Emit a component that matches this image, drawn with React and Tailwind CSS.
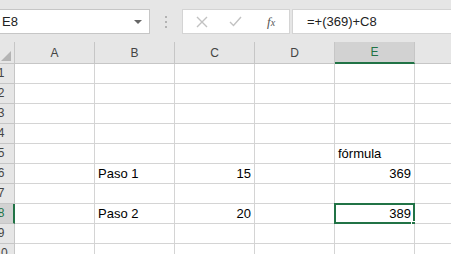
import React from 'react'

const cols = ['A', 'B', 'C', 'D', 'E', 'F']

// cell contents keyed by row number
const cells = {
  5: { E: { text: 'fórmula', align: 'left' } },
  6: { B: { text: 'Paso 1', align: 'left' }, C: { text: '15', align: 'right' }, E: { text: '369', align: 'right' } },
  8: { B: { text: 'Paso 2', align: 'left' }, C: { text: '20', align: 'right' }, E: { text: '389', align: 'right' } },
}

function Toolbar() {
  return (
    <div className="flex h-[42px] items-start pt-[9px]">
      {/* name box */}
      <div className="flex h-[25px] w-[150px] shrink-0 items-center justify-between border border-l-0 border-[#c6c6c6] bg-white pr-[7px]">
        <span className="pl-[2px] text-[13px] text-[#222]">E8</span>
        <span className="h-0 w-0 border-x-[4px] border-t-[4px] border-x-transparent border-t-[#666]"></span>
      </div>
      {/* grip dots */}
      <div className="flex w-[32px] shrink-0 flex-col items-center gap-[3px] pt-[7px]">
        <span className="h-[2px] w-[2px] bg-[#b3b3b3]"></span>
        <span className="h-[2px] w-[2px] bg-[#b3b3b3]"></span>
        <span className="h-[2px] w-[2px] bg-[#b3b3b3]"></span>
      </div>
      {/* cancel / enter / fx */}
      <div className="flex h-[25px] w-[108px] shrink-0 items-center border border-[#d4d4d4] bg-white">
        <svg width="12" height="12" viewBox="0 0 12 12" className="ml-[13px]">
          <path d="M1 1 L11 11 M11 1 L1 11" stroke="#c2c2c2" strokeWidth="1.4" fill="none" />
        </svg>
        <svg width="13" height="11" viewBox="0 0 13 11" className="ml-[21px]">
          <path d="M1 6 L4.5 9.5 L12 1" stroke="#c2c2c2" strokeWidth="1.4" fill="none" />
        </svg>
        <span className="ml-[25px] font-['Liberation_Serif'] text-[13px] italic text-[#555]">
          f<span className="text-[10px]">x</span>
        </span>
      </div>
      {/* formula input */}
      <div className="ml-[2px] flex h-[25px] flex-1 items-center border border-r-0 border-[#d4d4d4] bg-white pl-[14px]">
        <span className="text-[13px] text-[#222]">=+(369)+C8</span>
      </div>
    </div>
  )
}

function HeaderRow() {
  return (
    <div className="flex h-[22px]">
      <div className="relative w-[15px] shrink-0 border-r border-b border-[#c6c6c6] bg-[#e6e6e6]">
        <span className="absolute bottom-[2px] right-[3px] h-0 w-0 border-b-[10px] border-l-[10px] border-b-[#b4b4b4] border-l-transparent"></span>
      </div>
      {cols.map((c) => {
        const sel = c === 'E'
        return (
          <div
            key={c}
            className={
              sel
                ? 'flex w-[80px] shrink-0 items-center justify-center border-r border-b-2 border-r-[#c6c6c6] border-b-[#217346] bg-[#d2d2d2] text-[12px] text-[#217346]'
                : 'flex w-[80px] shrink-0 items-center justify-center border-r border-b border-[#c6c6c6] bg-[#e6e6e6] text-[12px] text-[#444]'
            }
          >
            {/* F's letter sits past the right edge of the window */}
            {c !== 'F' && c}
          </div>
        )
      })}
    </div>
  )
}

function Row({ n }) {
  const sel = n === 8
  const data = cells[n] || {}
  return (
    <div className="flex h-[20px]">
      <div
        className={
          sel
            ? 'w-[15px] shrink-0 overflow-hidden border-r-2 border-b border-r-[#217346] border-b-[#c6c6c6] bg-[#d2d2d2]'
            : 'w-[15px] shrink-0 overflow-hidden border-r border-b border-[#c6c6c6] bg-[#e6e6e6]'
        }
      >
        <div className={sel ? 'ml-[-13px] w-[28px] text-center text-[12px] leading-[19px] text-[#217346]' : 'ml-[-13px] w-[28px] text-center text-[12px] leading-[19px] text-[#444]'}>
          {n}
        </div>
      </div>
      {cols.map((c) => {
        const cell = data[c]
        const active = sel && c === 'E'
        return (
          <div
            key={c}
            className={
              'relative flex w-[80px] shrink-0 items-end border-r border-b border-[#d4d4d4] bg-white px-[3px] pb-[1px] text-[13px] leading-[16px] text-black ' +
              (cell && cell.align === 'right' ? 'justify-end' : 'justify-start')
            }
          >
            {cell && <span>{cell.text}</span>}
            {active && (
              <>
                <div className="absolute left-[-1px] top-[-1px] h-[21px] w-[81px] border-2 border-[#217346]"></div>
                <div className="absolute bottom-[-4px] right-[-3px] h-[6px] w-[6px] border border-white bg-[#217346]"></div>
              </>
            )}
          </div>
        )
      })}
    </div>
  )
}

export default function App() {
  const rows = [1, 2, 3, 4, 5, 6, 7, 8, 9, 10]
  return (
    <div className="h-[254px] w-[451px] overflow-hidden bg-[#e6e6e6] font-['Liberation_Sans',sans-serif]">
      <Toolbar />
      <HeaderRow />
      {rows.map((n) => (
        <Row key={n} n={n} />
      ))}
    </div>
  )
}
